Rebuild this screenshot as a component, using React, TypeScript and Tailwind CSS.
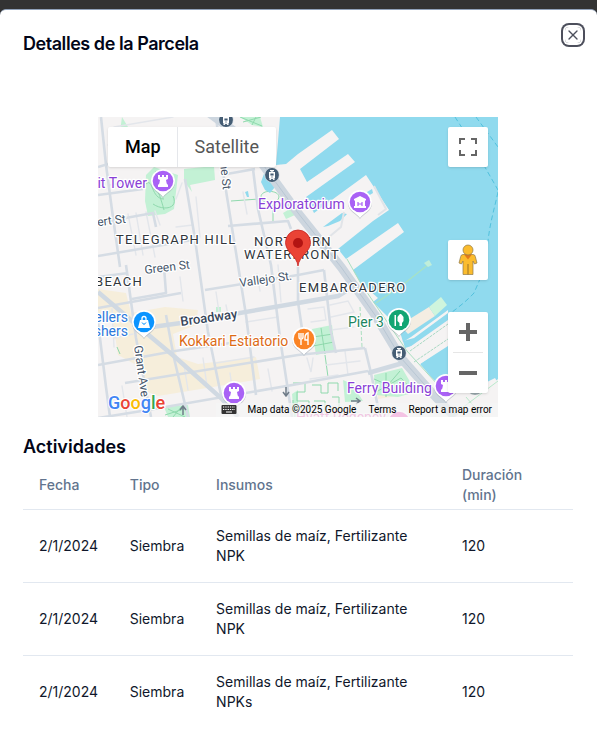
import type { ReactNode } from "react";
import { X } from "lucide-react";

type PinProps = { x: number; y: number; color: string; children?: ReactNode };

function Pin({ x, y, color, children }: PinProps) {
  return (
    <g transform={`translate(${x} ${y})`}>
      <path d="M0 16C-3 11-12 9-12 0a12 12 0 0 1 24 0c0 9-9 11-12 16z" fill="#8a93a0" opacity=".45" />
      <path d="M0 15C-3 10-12 8-12-1a12 12 0 0 1 24 0C12 8 3 10 0 15z" fill="#fff" />
      <circle cy="-1" r="10.3" fill={color} />
      {children}
    </g>
  );
}

function Rook() {
  return <path d="M-5-7h2v2h2v-2h2v2h2v-2h2v4l-2 1 .7 3.5L5 3v2H-5V3l1.3-1.5L-3-2l-2-1z" fill="#fff" />;
}

function Station({ x, y }: { x: number; y: number }) {
  return (
    <g transform={`translate(${x} ${y})`}>
      <circle r="7.6" fill="#d5dde4" />
      <circle r="6.9" fill="#455d74" />
      <path d="M-2-5h4v1.2H.7v.8H3v6.5H1.6L3 5H1.4L.4 3.8H-.4L-1.4 5H-3l1.4-1.5H-3V-3h2.3v-.8H-2z" fill="#fff" />
      <path d="M-1.6-1.4h3.2V.4h-3.2zM-.6 1.4H.6v1.2H-.6z" fill="#455d74" />
    </g>
  );
}

const minorRoads = [
  "M3 0 8 48 14 93 22 150",
  "M0 50 10 47M0 78 45 72M0 106 55 96 58 110M0 139 100 122M130 109 190 104 193 112",
  "M28 148 38 221 53 300M0 160 30 156",
  "M66 150 68 176 34 182M87 62 97 122 110 215 124 283",
  "M118 0 125 55 140 148 148 198 158 278",
  "M155 52 160 92 173 148 182 221 194 300",
  "M123 58 157 52M0 191 83 176M107 173 200 158 226 153",
  "M0 248 77 234 160 222M27 266 200 238 267 231",
  "M0 301 50 293 200 267 270 254",
  "M68 198 76 241 90 300M0 205 8 270 12 300",
  "M226 153 233 215 238 236M200 150 200 185 207 232",
  "M267 231 273 256 282 300M270 256 305 246",
];

const alleys = [
  "M30 97 38 138M38 96 45 138M48 95 57 140M57 94 62 108",
  "M84 66 78 82M98 80 102 120M78 110 95 108",
  "M16 10 75 0M10 28 35 24M12 68 25 66M137 36 151 34M145 75 149 97",
  "M14 192 16 230M82 160 85 184M118 175 121 195M159 157 162 174",
  "M16 221 35 217M128 188 131 203M148 205 180 200",
  "M118 246 156 240M132 256 136 284M170 252 174 274",
  "M86 248 90 273M24 269 29 300M105 241 109 269",
  "M180 148 183 185M209 241 213 255 215 241M247 234 250 258",
  "M210 192 226 190 228 203 213 205M232 188 250 184 256 195 233 200M256 210 233 213",
  "M212 262 240 258M228 248 262 244",
];

function MapDrawing() {
  return (
    <svg viewBox="0 0 400 300" className="block h-full w-full" role="img" aria-label="Mapa de la parcela">
      <rect width="400" height="300" fill="#f5f3f3" />

      <g fill="#f6eedb">
        <path d="M0 172 28 176 33 196 67 190 100 193 98 208 75 217 79 240 100 247 158 240 162 262 115 270 60 279 50 275 42 250 20 238 15 205 0 196z" />
        <path d="M280 266 298 263 299 279 280 282z" />
      </g>

      <g fill="#c3f1d5">
        <path d="M48 58 56 50 80 58 76 92 67 97 50 99 47 84z" />
        <path d="M86 52 116 49 117 63 92 68 94 75 86 64zM24 0 30 10 27 21 22 14z" />
        <path d="M142 0 162 0 165 10 154 8z" />
        <path d="M118 190h5v5h-5z" />
        <path d="M214 212 234 208 237 234 218 238z" />
        <path d="M276 258 304 251 318 275 300 280 278 278zM245 263 254 267 265 284 247 285z" />
        <path d="M66 290 90 288 92 300H70zM194 277 200 273V300h-4zM185 96 195 90 197 98 188 102z" />
      </g>
      <g fill="none" stroke="#8fd9ad" strokeWidth="1">
        <path d="M48 67C55 60 53 82 66 82M58 54C53 63 60 70 66 93M75 79C81 92 65 94 55 87M215 220l20-3M215 229l21-4M223 211l4 26" />
        <path d="M142 0l22 9M145 5l18-5M154 8l4-8M133 84l28-2M163 80c0-8 18-7 18 0s-18 8-18 0M175 88v17" />
        <path d="M276 262l14 6 12-14M278 275l25-14 13 14M288 256v24" />
        <path d="M19 230l3 7M67 298l22-7M70 292l17 8M84 289l-9 11M227 238l3 22" />
        <path d="M195 266h12v9h-8v9h12v8h-16v-9M214 268h9v8h7v-10h10v8M216 284h11v12M234 280h7v12h-9M202 298h20" />
      </g>

      <path d="M182 0H400V262L386 274 350 276 334 261 322 247 350 227V193L313 220 305 225 300 208 289 199 275 185 280 181 262 165 255 153 306 115 300 106 248 142 240 132 275 104 291 93 268 58 216 96 208 80 257 45 250 37 209 65 202 52 241 22 234 13 200 37 188 47 178 48z" fill="#90daee" />
      <path d="M225 110 244 96 249 97 242 104 230 109zM269 75 274 72 275 76 270 79zM163 65 167 54 177 70 172 76 167 73zM147 75 150 74 151 80 149 80z" fill="#90daee" />

      <g fill="none" stroke="#52c1dd" strokeDasharray="5 3">
        <path d="M357 0 368 17 400 73M378 0 400 30M400 75C394 102 390 111 388 148L376 176C363 190 350 197 334 211" />
      </g>

      <path d="M276 69 288 92 280 98M225 125 243 110 246 95" fill="none" stroke="#e1e4e8" strokeWidth="2" />
      <path d="M302 208 331 190 337 199 310 217z" fill="#f4ede2" />
      <path d="M331 190 343 180 349 188 337 199z" fill="#cff5dd" />
      <path d="M278 186 307 166 331 147" fill="none" stroke="#a6e2c6" strokeWidth="1.5" />
      <path d="M326 146 331 143 334 148 330 150z" fill="#bfeeda" />
      <path d="M305 224 316 221 350 196V205L317 228 307 231z" fill="#90daee" />
      <path d="M309 232 350 203V229L322 247 330 262 318 262z" fill="#f5f3f3" />
      <path d="M312 234 350 207M316 245 350 222" fill="none" stroke="#a9d9c4" strokeDasharray="3 1" />

      <g fill="none" stroke="#e3e6eb" strokeWidth="1.4" strokeLinecap="round">
        {alleys.map((d) => <path key={d} d={d} />)}
      </g>
      <g fill="none" stroke="#d5dce4" strokeWidth="2.6" strokeLinejoin="round">
        {minorRoads.map((d) => <path key={d} d={d} />)}
      </g>
      <path d="M0 175 47 215 77 240 123 281 140 300M47 211 83 206 200 186 240 179 250 173M270 256 305 246" fill="none" stroke="#d0d9e2" strokeWidth="4.5" />
      <path d="M110-5 136 14 158 38 200 96 243 150 277 198 303 241 333 275 357 300" fill="none" stroke="#cdd6df" strokeWidth="9" />
      <path d="M136 14 158 38 200 96 243 150 277 198 303 241 333 275" fill="none" stroke="#b9c7d4" strokeWidth="1" />
      <path d="M249 142 262 165 279 190 309 234 340 268 365 300" fill="none" stroke="#aadfc0" />
      <path d="M262 190 264 230" fill="none" stroke="#aadfc0" strokeDasharray="4 2" />
      <path d="M345 280 375 272 397 261 400 266V300H362z" fill="#f5f3f3" />
      <path d="M352 300 400 264M368 280 385 300" fill="none" stroke="#b9e8cb" />
      <circle cx="377" cy="269" r="9" fill="#9ba9ae" />

      <g fontFamily="Roboto, sans-serif" strokeLinejoin="round" paintOrder="stroke" stroke="#fff" strokeWidth="2.5">
        <g fill="#46566a" fontSize="12">
          <text transform="translate(-7 110) rotate(-7)">bert St</text>
          <text transform="translate(47 157) rotate(-7)">Green St</text>
          <text transform="translate(142 170) rotate(-8)">Vallejo St.</text>
          <text transform="translate(36 229) rotate(82)">Grant Ave</text>
          <text transform="translate(122 46) rotate(84)">ne St</text>
          <text transform="translate(83 209) rotate(-8)" fontSize="13" fontWeight="500" fill="#37465a">Broadway</text>
        </g>
        <g fill="#2f353b" fontSize="13" className="tracking-widest">
          <text x="18" y="127">TELEGRAPH HILL</text>
          <text x="156" y="129">NORTHERN</text>
          <text x="146" y="142">WATERFRONT</text>
          <text x="201" y="175">EMBARCADERO</text>
          <text x="-3" y="169">BEACH</text>
        </g>
        <g fontSize="14">
          <text x="49" y="71" textAnchor="end" fill="#8a3fd6">it Tower</text>
          <text x="160" y="92" fill="#8a3fd6">Exploratorium</text>
          <text x="249" y="276" fill="#8a3fd6">Ferry Building</text>
          <text x="30" y="205" textAnchor="end" fill="#2c78dc">ellers</text>
          <text x="30" y="219" textAnchor="end" fill="#2c78dc">shers</text>
          <text x="81" y="229" fill="#dc6a16">Kokkari Estiatorio</text>
          <text x="250" y="210" fill="#1c8560">Pier 3</text>
          <text x="198" y="305" fill="#e45bb5">Hyatt Regency</text>
        </g>
      </g>

      <Station x={128} y={3} />
      <Station x={174} y={58} />
      <Station x={301} y={236} />
      <Pin x={65} y={65} color="#a962f5"><Rook /></Pin>
      <Pin x={136} y={277} color="#a962f5"><Rook /></Pin>
      <Pin x={348} y={270} color="#a962f5"><Rook /></Pin>
      <Pin x={301} y={306} color="#f04fbc" />
      <Pin x={262} y={86} color="#a962f5">
        <path d="M-6-4 0-7 6-4v1.5H5V3h1v2H-6V3h1v-5.500h-1z" fill="#fff" />
        <path d="M-2 3v-4M2 3v-4M-2 1h4" stroke="#a962f5" strokeWidth="1.2" />
      </Pin>
      <Pin x={46} y={206} color="#0a94ff">
        <path d="M-4-3H4L6 5H-6z" fill="#fff" />
        <path d="M-2-3v-1.500a2 2 0 0 1 4 0V-3" fill="none" stroke="#fff" strokeWidth="1.3" />
        <path d="M-2-.5q2 3.500 4 0" fill="none" stroke="#0a94ff" />
      </Pin>
      <Pin x={206} y={223} color="#fb8425">
        <path d="M-5-7v4q0 2 2 2v6M-1-7v4q0 2-2 2M-3-7v5M4 5v-12Q1-6 1-2v2h3" fill="none" stroke="#fff" strokeWidth="1.4" />
      </Pin>
      <Pin x={301} y={204} color="#12a573">
        <path d="M-4.500-6h1.500V5h-1.500zM0-6l1-1h1l1 1 1.500 2v4L3 2v3H.5V2L-1.500 0v-4z" fill="#fff" />
      </Pin>

      <path d="M200 149c-1-10-12.500-14-12.500-23.500a12.500 12.500 0 0 1 25 0c0 9.500-11.500 13.500-12.500 23.500z" fill="#ea4335" stroke="#c5221f" strokeWidth=".8" />
      <circle cx="200" cy="126" r="5" fill="#b31412" />
      <path d="M85 298v-8m-3 3 3-4 3 4M188 270v8m-3-3 3 4 3-4M253 284h8m-3-3 4 3-4 3" fill="none" stroke="#6f7c88" strokeWidth="1.5" />
    </svg>
  );
}

function Pegman() {
  return (
    <svg viewBox="0 0 20 32" className="h-8 w-5" aria-hidden="true">
      <path d="M5 10.500h10q2 0 2.300 2L19 19l-2.500 1-1.500-3v13.500H5V17l-1.500 3L1 19l1.700-6.500q.3-2 2.300-2z" fill="#fbbc2e" stroke="#8f7a4a" strokeWidth=".7" />
      <path d="M6 10.500h8l-4 5z" fill="#e37a1c" />
      <path d="M10 20v10.500" stroke="#9a7224" />
      <circle cx="10" cy="6" r="5" fill="#fbbc2e" stroke="#8f7a4a" strokeWidth=".7" />
    </svg>
  );
}

function KeyboardIcon() {
  return (
    <svg viewBox="0 0 16 10" className="block h-[10px] w-4" aria-hidden="true">
      <rect x=".5" width="15" height="9" rx="1" fill="#333" />
      <path d="M2 2h12M2 4.500h12" stroke="#fff" strokeWidth="1.2" strokeDasharray="1.3 1" />
      <path d="M5 7h6" stroke="#fff" strokeWidth="1" />
    </svg>
  );
}

const control = "absolute right-[10px] flex w-10 items-center justify-center bg-white shadow-sm rounded-[2px]";

function MapPanel() {
  return (
    <div className="relative mx-auto aspect-[4/3] w-full max-w-[400px] overflow-hidden font-[Roboto,sans-serif]">
      <MapDrawing />
      <div className="absolute top-[10px] left-[10px] flex h-10 rounded-[2px] bg-white text-lg shadow-sm">
        <button type="button" className="border-r border-gray-200 pr-4 pl-[17px] font-medium text-black">Map</button>
        <button type="button" className="px-[17px] text-[#565656]">Satellite</button>
      </div>
      <button type="button" aria-label="Toggle fullscreen view" className={`${control} top-[10px] h-10`}>
        <svg viewBox="0 0 18 18" className="size-[18px]" fill="none" stroke="#666" strokeWidth="2" aria-hidden="true">
          <path d="M1 6V1h5M12 1h5v5M17 12v5h-5M6 17H1v-5" />
        </svg>
      </button>
      <button type="button" aria-label="Street View Pegman" className={`${control} bottom-[137px] h-10`}>
        <Pegman />
      </button>
      <div className={`${control} bottom-6 flex-col`}>
        <button type="button" aria-label="Zoom in" className="flex h-10 w-10 items-center justify-center">
          <svg viewBox="0 0 18 18" className="size-[18px]" aria-hidden="true"><path d="M9 0v18M0 9h18" stroke="#666" strokeWidth="4" /></svg>
        </button>
        <span className="h-px w-[30px] bg-[#e6e6e6]" />
        <button type="button" aria-label="Zoom out" className="flex h-10 w-10 items-center justify-center">
          <svg viewBox="0 0 18 18" className="size-[18px]" aria-hidden="true"><path d="M0 9h18" stroke="#666" strokeWidth="4" /></svg>
        </button>
      </div>
      <div className="absolute bottom-1 left-[10px] text-lg leading-5 font-medium [paint-order:stroke] [-webkit-text-stroke:2px_white]" role="img" aria-label="Google">
        <span className="text-[#4285f4]">G</span><span className="text-[#ea4335]">o</span><span className="text-[#fbbc04]">o</span><span className="text-[#4285f4]">g</span><span className="text-[#34a853]">l</span><span className="text-[#ea4335]">e</span>
      </div>
      <div className="absolute right-0 bottom-0 flex h-[14px] items-center text-[10px] leading-[14px] text-black">
        <button type="button" aria-label="Keyboard shortcuts" className="flex h-[14px] items-center bg-[#f5f5f5]/70 px-[5px]"><KeyboardIcon /></button>
        <span className="bg-[#f5f5f5]/70 px-[6px]">Map data ©2025 Google</span>
        <a href="#terms" className="bg-[#f5f5f5]/70 px-[6px]">Terms</a>
        <a href="#report" className="bg-[#f5f5f5]/70 px-[6px]">Report a map error</a>
      </div>
    </div>
  );
}

const actividades = [
  { fecha: "2/1/2024", tipo: "Siembra", insumos: "Semillas de maíz, Fertilizante NPK", duracion: 120 },
  { fecha: "2/1/2024", tipo: "Siembra", insumos: "Semillas de maíz, Fertilizante NPK", duracion: 120 },
  { fecha: "2/1/2024", tipo: "Siembra", insumos: "Semillas de maíz, Fertilizante NPKs", duracion: 120 },
];

export default function App() {
  return (
    <div className="flex min-h-screen flex-col bg-[#333] pt-[9px] font-[Inter,sans-serif]">
      <div role="dialog" aria-labelledby="titulo" className="relative flex-1 rounded-t-md border-t border-slate-400 bg-white pt-[25px] pr-6 pl-[23px] text-slate-950">
        <h2 id="titulo" className="text-lg leading-[18px] font-semibold tracking-tight">Detalles de la Parcela</h2>
        <button type="button" aria-label="Cerrar" className="absolute top-[17px] right-4 size-4 rounded-sm opacity-70 ring-2 ring-slate-950 ring-offset-2">
          <X className="size-4" />
        </button>
        <div className="mt-16">
          <MapPanel />
        </div>
        <h3 className="mt-4 text-lg font-semibold">Actividades</h3>
        <table className="w-full table-fixed text-left text-sm text-slate-900">
          <thead>
            <tr className="h-12 border-b border-slate-200 text-slate-500">
              <th scope="col" className="w-[16.5%] px-4 font-medium">Fecha</th>
              <th scope="col" className="w-[15.7%] px-4 font-medium">Tipo</th>
              <th scope="col" className="w-[44.7%] px-4 font-medium">Insumos</th>
              <th scope="col" className="px-4 font-medium">Duración (min)</th>
            </tr>
          </thead>
          <tbody>
            {actividades.map((a, i) => (
              <tr key={i} className="border-b border-slate-200 last:border-0">
                <td className="p-4">{a.fecha}</td>
                <td className="p-4">{a.tipo}</td>
                <td className="p-4">{a.insumos}</td>
                <td className="p-4">{a.duracion}</td>
              </tr>
            ))}
          </tbody>
        </table>
      </div>
    </div>
  );
}
